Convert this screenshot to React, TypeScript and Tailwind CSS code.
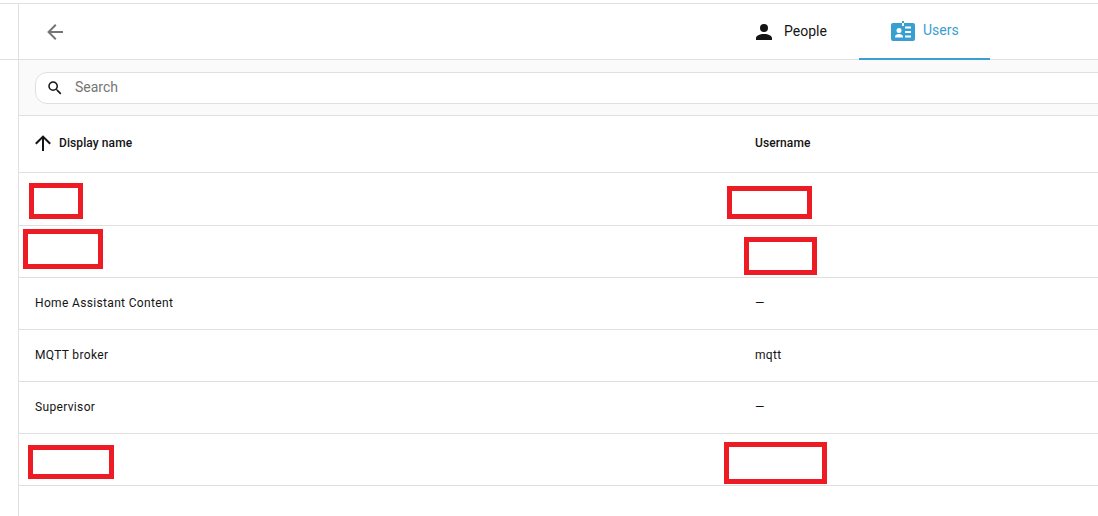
import { useState } from 'react';

const rows = [
  { name: '', username: '' },
  { name: '', username: '' },
  { name: 'Home Assistant Content', username: '—' },
  { name: 'MQTT broker', username: 'mqtt' },
  { name: 'Supervisor', username: '—' },
  { name: '', username: '' },
];

const redactions = [
  'left-[29px] top-[183px] h-[36px] w-[54px]',
  'left-[23px] top-[229px] h-[40px] w-[80px]',
  'left-[727px] top-[186px] h-[33px] w-[85px]',
  'left-[744px] top-[237px] h-[38px] w-[73px]',
  'left-[28px] top-[445px] h-[34px] w-[86px]',
  'left-[724px] top-[442px] h-[42px] w-[103px]',
];

function MdiIcon({ d, className }: { d: string; className?: string }) {
  return (
    <svg viewBox="0 0 24 24" fill="currentColor" className={className}>
      <path d={d} />
    </svg>
  );
}

function UsersIcon() {
  return (
    <svg viewBox="0 0 24 20" className="h-[20px] w-[24px]">
      <rect x="0" y="2" width="24" height="18" rx="2" fill="#389fd0" />
      <rect x="11" y="0" width="2" height="5" fill="#389fd0" />
      <rect x="11" y="2" width="2" height="3" fill="#fff" />
      <circle cx="8" cy="9.5" r="2.5" fill="#fff" />
      <path d="M4 16c0-2.2 2-3 4-3s4 .8 4 3v.5H4z" fill="#fff" />
      <rect x="14" y="5.5" width="6" height="2" fill="#fff" />
      <rect x="14" y="10" width="6" height="2" fill="#fff" />
      <rect x="14" y="14.5" width="6" height="2" fill="#fff" />
    </svg>
  );
}

export default function App() {
  const [query, setQuery] = useState('');

  return (
    <div className="relative h-[516px] w-[1098px] overflow-hidden bg-white pt-[3px] font-['Roboto',sans-serif] text-[#141414]">
      <div className="flex h-[513px] border-t border-[#e0e0e0]">
        <div className="w-[19px] shrink-0 border-r border-[#e0e0e0]">
          <div className="h-[56px] border-b border-[#e0e0e0]" />
        </div>

        <div className="min-w-0 flex-1">
          <div className="flex h-[56px] items-center border-b border-[#e0e0e0]">
            <button className="ml-[24px] text-[#757575]">
              <MdiIcon d="M20,11V13H8L13.5,18.5L12.08,19.92L4.16,12L12.08,4.08L13.5,5.5L8,11H20Z" className="h-[24px] w-[24px]" />
            </button>
            <div className="ml-[685px] flex h-full">
              <div className="flex w-[107px] items-center">
                <MdiIcon d="M12,4A4,4 0 0,1 16,8A4,4 0 0,1 12,12A4,4 0 0,1 8,8A4,4 0 0,1 12,4M12,14C16.42,14 20,15.79 20,18V20H4V18C4,15.79 7.58,14 12,14Z" className="h-[24px] w-[24px]" />
                <span className="ml-[8px] text-[14px]">People</span>
              </div>
              <div className="-mb-px flex w-[131px] items-center border-b-2 border-[#389fd0] pl-[32px]">
                <UsersIcon />
                <span className="mb-[1px] ml-[8px] text-[14px] text-[#389fd0]">Users</span>
              </div>
            </div>
          </div>

          <div className="h-[56px] border-b border-[#e0e0e0] bg-[#fafafa] py-[12px] pl-[16px]">
            <label className="flex h-[32px] w-[1100px] items-center rounded-[12px] border border-[#e0e0e0] bg-white pl-[10px]">
              <MdiIcon d="M9.5,3A6.5,6.5 0 0,1 16,9.5C16,11.11 15.41,12.59 14.44,13.73L14.71,14H15.5L20.5,19L19,20.5L14,15.5V14.71L13.73,14.44C12.59,15.41 11.11,16 9.5,16A6.5,6.5 0 0,1 3,9.5A6.5,6.5 0 0,1 9.5,3M9.5,5C7,5 5,7 5,9.5C5,12 7,14 9.5,14C12,14 14,12 14,9.5C14,7 12,5 9.5,5Z" className="h-[18px] w-[18px]" />
              <input
                value={query}
                onChange={(e) => setQuery(e.target.value)}
                placeholder="Search"
                className="mb-[2px] ml-[11px] flex-1 bg-transparent text-[14px] outline-none placeholder:text-[#757575]"
              />
            </label>
          </div>

          <div className="flex h-[57px] items-center border-b border-[#e0e0e0] pb-[2px] text-[12px] font-medium tracking-[0.09px]">
            <div className="flex w-[736px] items-center pl-[12px]">
              <MdiIcon d="M13,20H11V8L5.5,13.5L4.08,12.08L12,4.16L19.92,12.08L18.5,13.5L13,8V20Z" className="h-[24px] w-[24px]" />
              <span className="ml-[4px]">Display name</span>
            </div>
            <div>Username</div>
          </div>

          {rows.map((row, i) => (
            <div key={i} className={`flex items-center border-b border-[#e0e0e0] pb-[2px] text-[12px] tracking-[0.34px] ${i === 0 ? 'h-[53px]' : 'h-[52px]'}`}>
              <div className="w-[736px] pl-[16px]">{row.name}</div>
              <div>{row.username}</div>
            </div>
          ))}
        </div>
      </div>

      {redactions.map((box) => (
        <div key={box} className={`absolute border-[5px] border-[#ed1c24] bg-white ${box}`} />
      ))}
    </div>
  );
}
